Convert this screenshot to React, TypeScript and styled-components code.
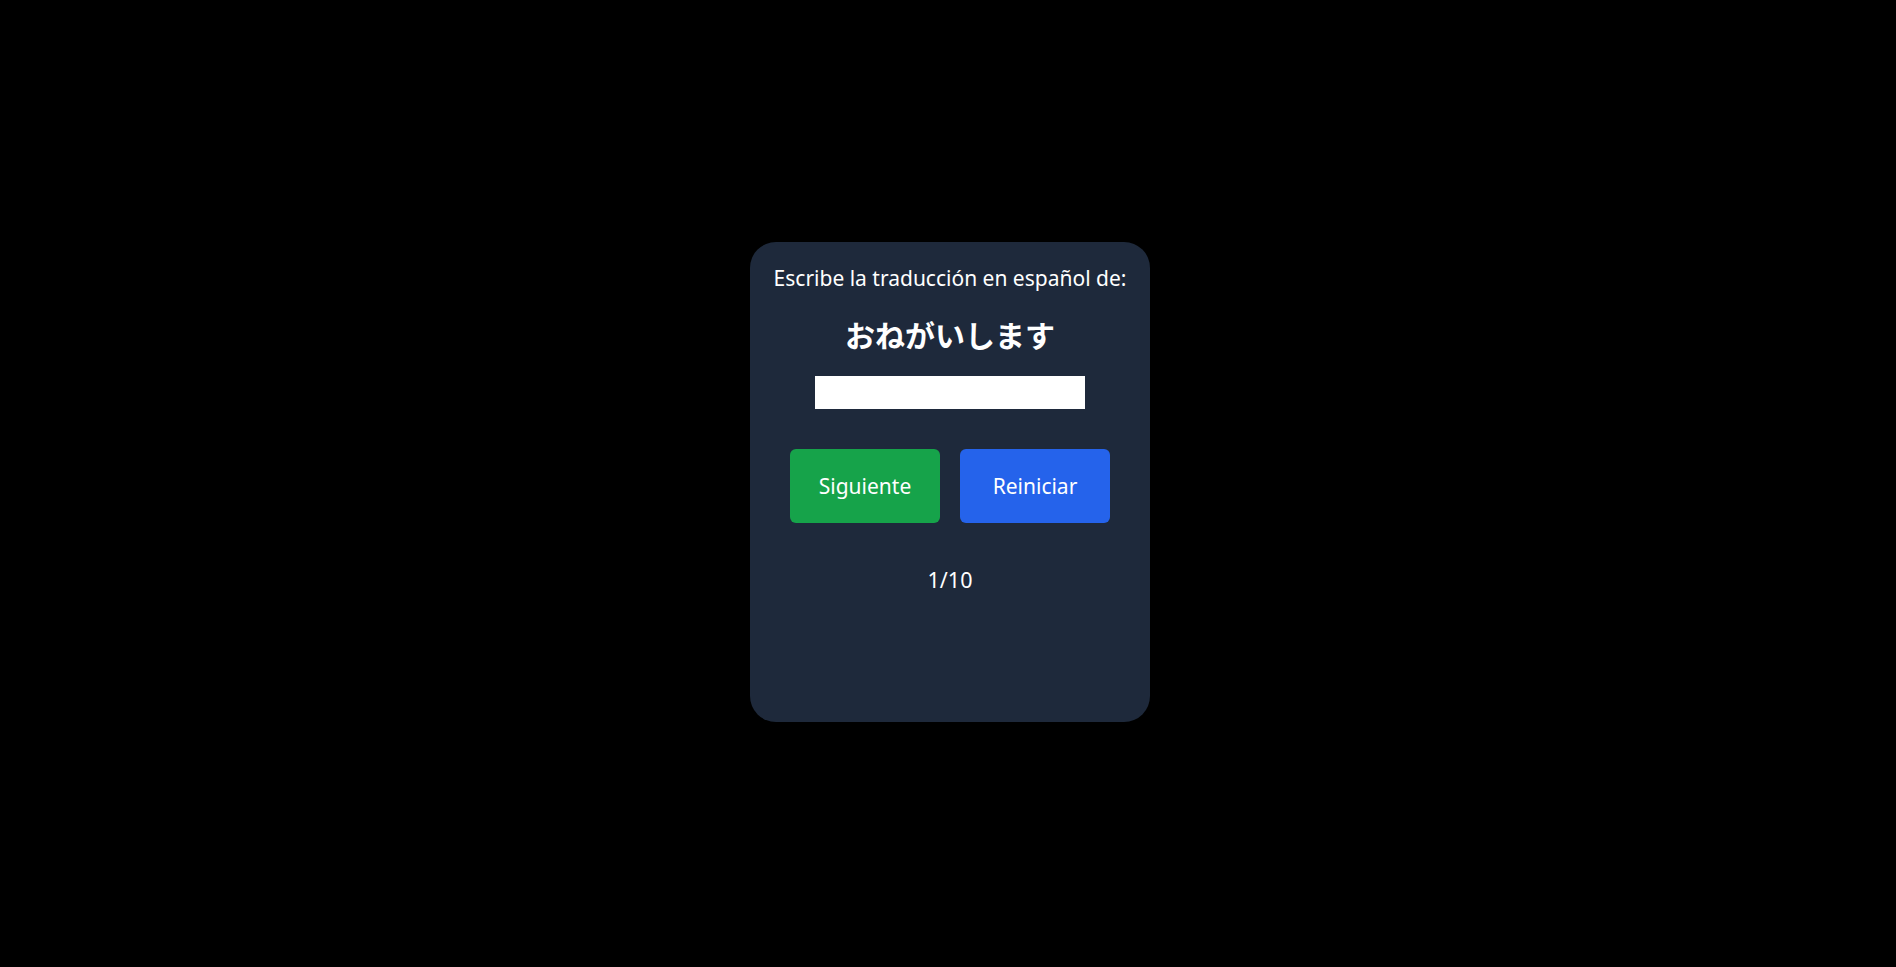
import React, { useState } from "react";
import styled, { createGlobalStyle } from "styled-components";

const GlobalStyle = createGlobalStyle`
	html, body {
		margin: 0;
		padding: 0;
		background: #000000;
	}
	body {
		font-family: "Noto Sans", "Noto Sans CJK JP", sans-serif;
	}
`;

const Page = styled.div`
	min-height: 100vh;
	display: flex;
	align-items: center;
	justify-content: center;
	padding: 0 0 3px 4px;
	box-sizing: border-box;
`;

const Card = styled.div`
	width: 400px;
	height: 480px;
	box-sizing: border-box;
	padding: 0 12px;
	background: #1e293b;
	border-radius: 26px;
	display: flex;
	flex-direction: column;
	align-items: center;
	color: #ffffff;
`;

const Prompt = styled.p`
	margin: 22px 0 0;
	font-size: 21px;
	line-height: 28px;
	white-space: nowrap;
`;

const Word = styled.h2`
	margin: 24px 0 0;
	font-family: "Noto Sans CJK JP", "Noto Sans", sans-serif;
	font-size: 30px;
	line-height: 36px;
	font-weight: 700;
`;

const AnswerInput = styled.input`
	margin-top: 24px;
	width: 270px;
	height: 33px;
	box-sizing: border-box;
	border: none;
	border-radius: 0;
	background: #ffffff;
	padding: 0 8px;
	font-size: 18px;
	font-family: "Noto Sans", sans-serif;
	outline: none;
`;

const ButtonRow = styled.div`
	margin-top: 40px;
	display: flex;
	gap: 20px;
`;

const ActionButton = styled.button<{ $color: string }>`
	width: 150px;
	height: 74px;
	border: none;
	border-radius: 6px;
	background: ${( p ) => p.$color};
	color: #ffffff;
	font-family: "Noto Sans", sans-serif;
	font-size: 21px;
	cursor: pointer;
`;

const Counter = styled.p`
	margin: 43px 0 0;
	font-size: 21.5px;
	line-height: 28px;
`;

const words = [ "おねがいします", "ありがとう", "こんにちは", "さようなら", "すみません", "おはよう", "こんばんは", "いただきます", "おやすみ", "はじめまして" ];

const App = () => {
	const [ index, setIndex ] = useState( 0 );
	const [ answer, setAnswer ] = useState( "" );

	return (
		<>
			<GlobalStyle />
			<Page>
				<Card>
					<Prompt>Escribe la traducción en español de:</Prompt>
					<Word>{words[index]}</Word>
					<AnswerInput value={answer} onChange={( e ) => setAnswer( e.target.value )} />
					<ButtonRow>
						<ActionButton $color="#16a34a" onClick={() => { setIndex( ( index + 1 ) % words.length ); setAnswer( "" ); }}>
							Siguiente
						</ActionButton>
						<ActionButton $color="#2563eb" onClick={() => { setIndex( 0 ); setAnswer( "" ); }}>
							Reiniciar
						</ActionButton>
					</ButtonRow>
					<Counter>{index + 1}/{words.length}</Counter>
				</Card>
			</Page>
		</>
	);
};

export default App;
